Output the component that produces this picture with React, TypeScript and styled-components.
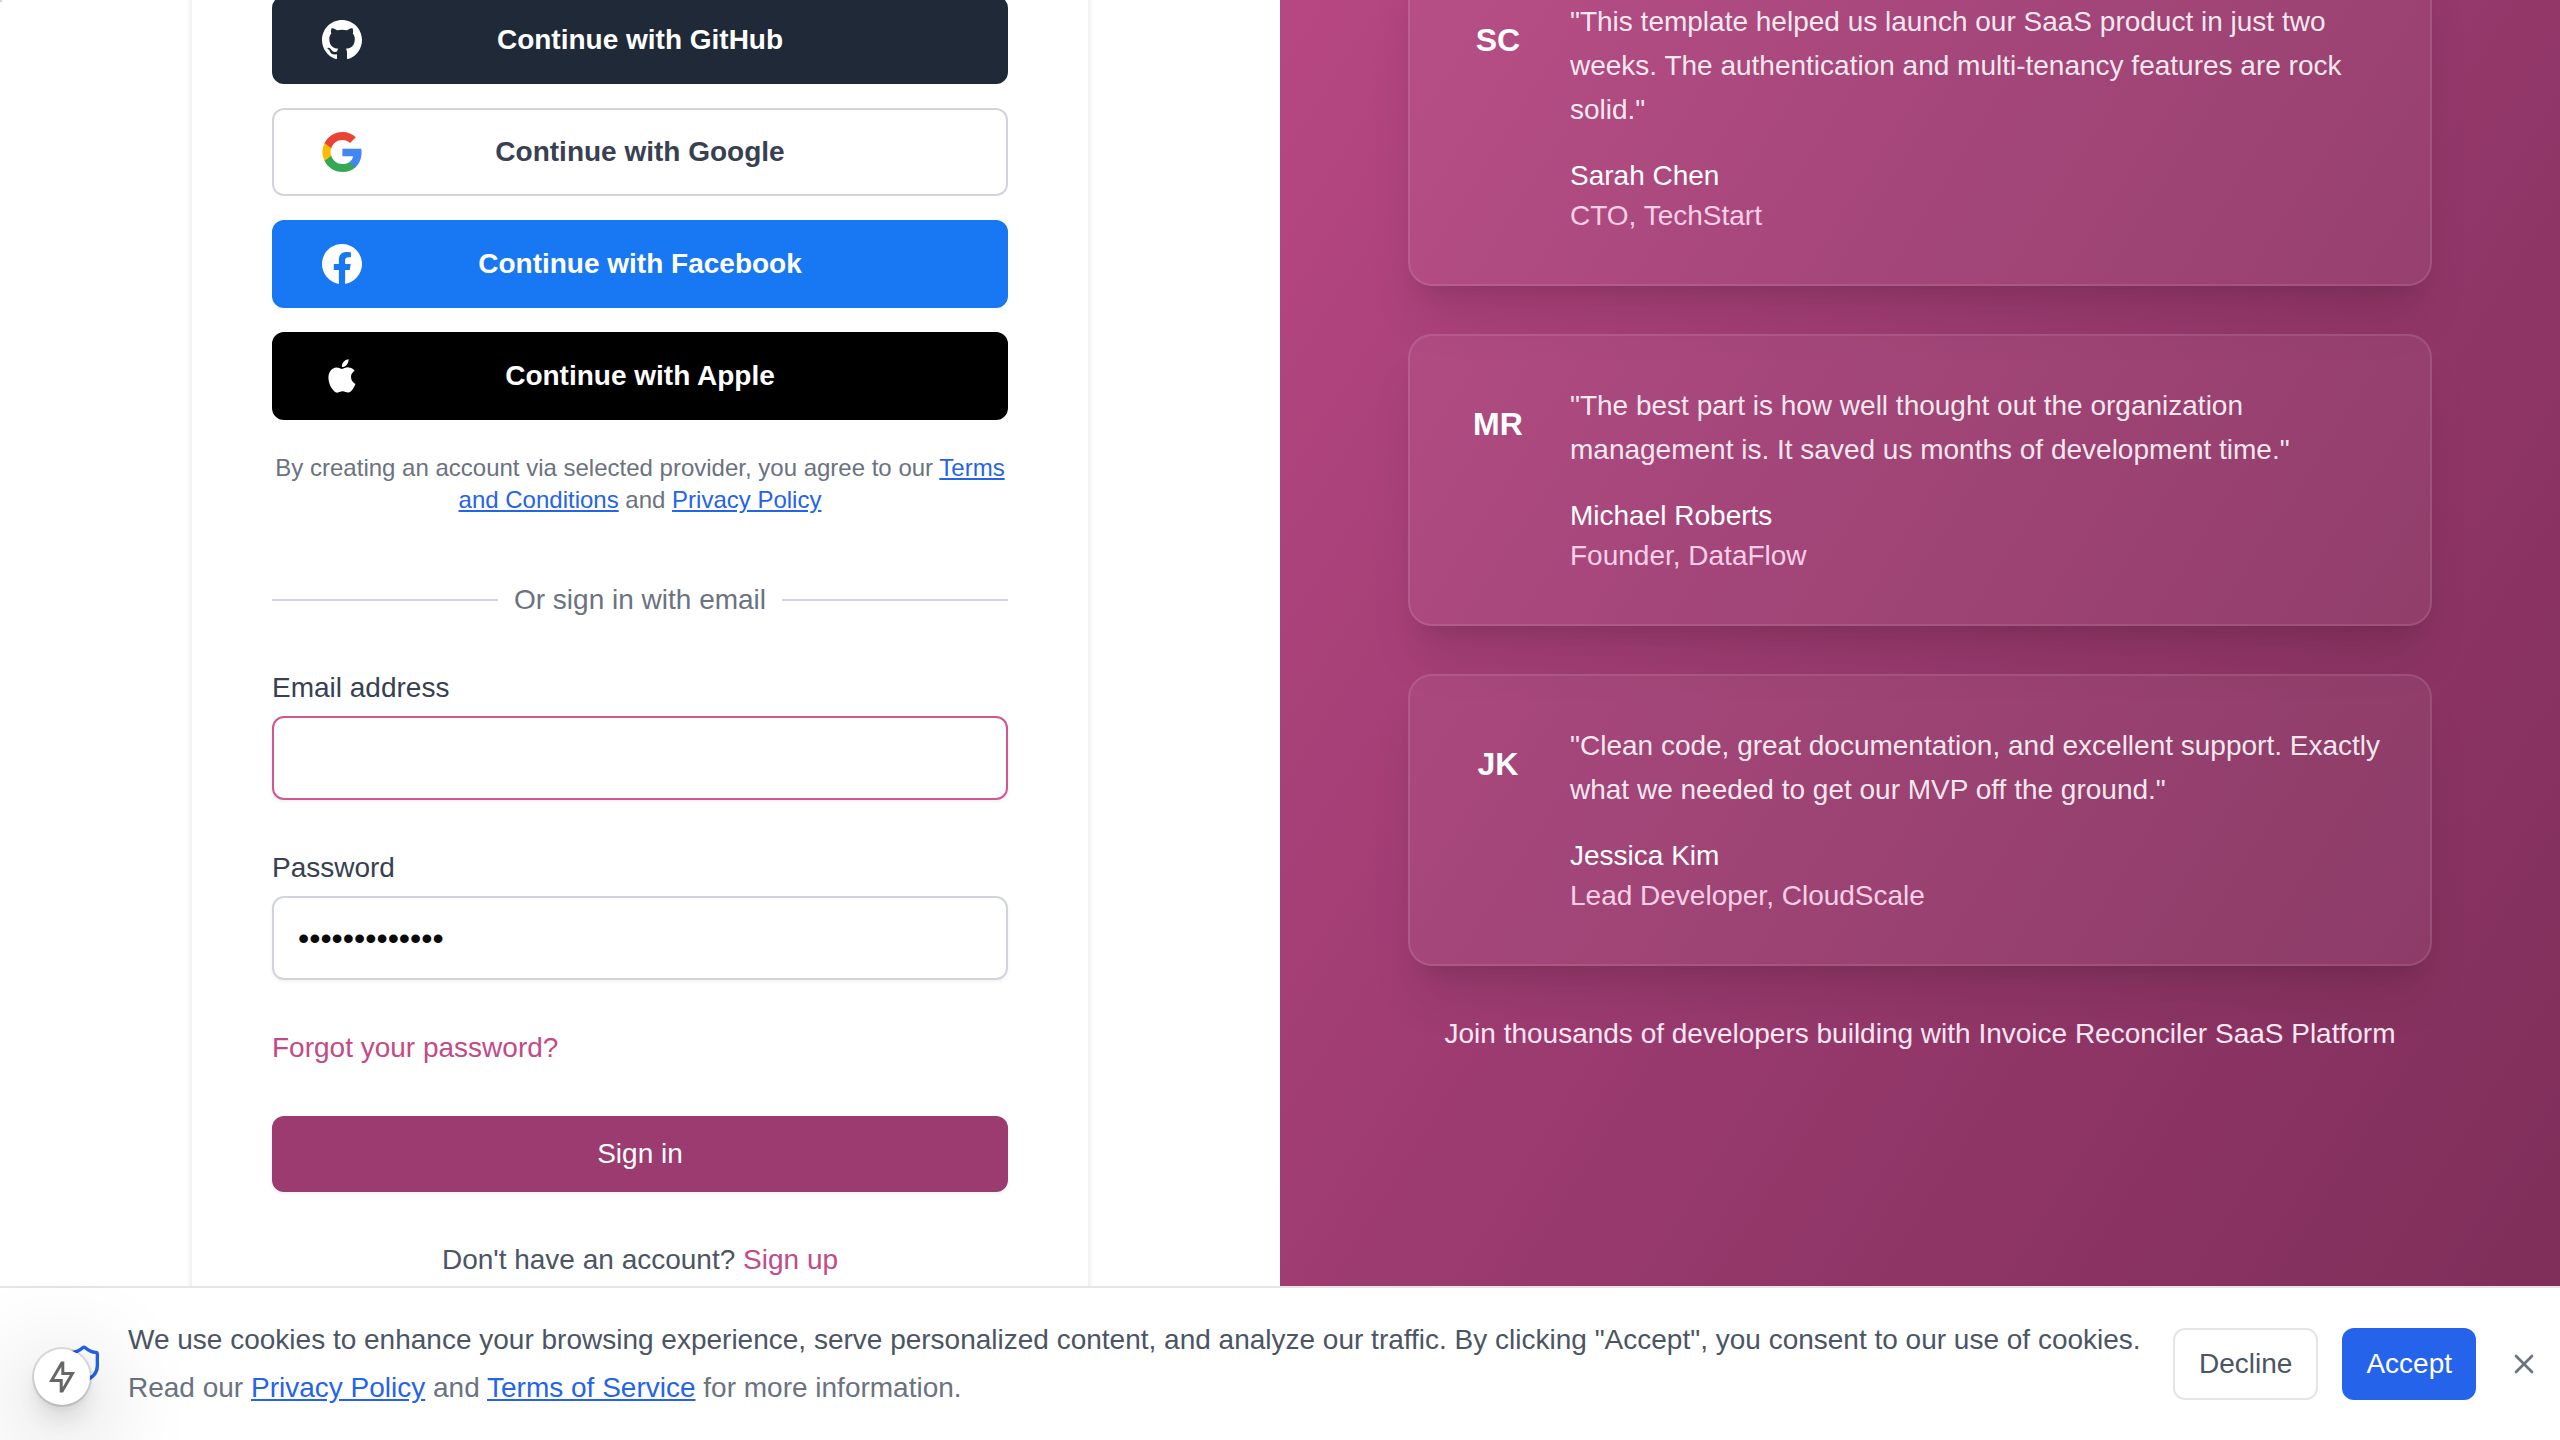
import React from 'react';
import styled, { createGlobalStyle, css } from 'styled-components';
import { Shield, X } from 'lucide-react';

const GlobalStyle = createGlobalStyle`
  *, *::before, *::after { box-sizing: border-box; }
  body {
    margin: 0;
    background: #ffffff;
    color: #0a0a0a;
    font-family: "Liberation Sans", Arial, sans-serif;
    font-size: 28px;
    line-height: 40px;
    -webkit-font-smoothing: antialiased;
  }
  button, input { font: inherit; }
  h2, p { margin: 0; }
`;

const Page = styled.div`
  height: 100vh;
  overflow: hidden;
`;

/* The page rests in a scrolled position, so its top part lies above the window. */
const Columns = styled.main`
  display: grid;
  grid-template-columns: 1fr 1fr;
  min-height: calc(100vh + 600px);
  margin-top: -600px;
`;

const SignInColumn = styled.section`
  display: flex;
  justify-content: center;
`;

const SignInCard = styled.div`
  width: 100%;
  max-width: 896px;
  padding: 596px 80px 80px;
  background: #ffffff;
  box-shadow: 0 2px 8px rgba(0, 0, 0, 0.12);
`;

const ProviderList = styled.div`
  display: flex;
  flex-direction: column;
  gap: 24px;
`;

type Tone = 'github' | 'google' | 'facebook' | 'apple';

const tones: Record<Tone, ReturnType<typeof css>> = {
  github: css`background: #1f2937; border-color: #1f2937; color: #ffffff;`,
  google: css`background: #ffffff; border-color: #d1d5db; color: #374151;`,
  facebook: css`background: #1877f2; border-color: #1877f2; color: #ffffff;`,
  apple: css`background: #000000; border-color: #000000; color: #ffffff;`,
};

const ProviderButton = styled.button<{ $tone: Tone }>`
  display: grid;
  grid-template-columns: 40px 1fr 40px;
  align-items: center;
  height: 88px;
  padding: 0 48px;
  border: 2px solid;
  border-radius: 12px;
  font-weight: 700;
  cursor: pointer;
  ${({ $tone }) => tones[$tone]}

  svg { display: block; width: 40px; height: 40px; }
`;

const Legal = styled.p`
  margin-top: 32px;
  color: #6b7280;
  font-size: 24px;
  line-height: 32px;
  text-align: center;
`;

const TextLink = styled.a`
  color: #2563eb;
  text-decoration: underline;
`;

const Divider = styled.div`
  display: flex;
  align-items: center;
  gap: 16px;
  margin: 64px 0 48px;
  color: #6b7280;

  &::before, &::after {
    content: "";
    flex: 1;
    height: 2px;
    background: #d1d5db;
  }
`;

const Form = styled.form`
  display: flex;
  flex-direction: column;
  gap: 48px;
`;

const Field = styled.div`
  display: flex;
  flex-direction: column;
  gap: 8px;
`;

const Label = styled.label`
  color: #374151;
`;

const Input = styled.input<{ $active?: boolean }>`
  width: 100%;
  height: 84px;
  padding: 0 24px;
  border: 2px solid ${({ $active }) => ($active ? '#d0578f' : '#d1d5db')};
  border-radius: 12px;
  background: #ffffff;
  color: #0a0a0a;
  font-size: 32px;
  box-shadow: 0 2px 4px rgba(0, 0, 0, 0.05);
  outline: none;
`;

const BrandLink = styled.a`
  color: #c24a86;
  text-decoration: none;
`;

const SubmitButton = styled.button`
  height: 76px;
  border: 0;
  border-radius: 12px;
  background: #9c3b70;
  color: #ffffff;
  box-shadow: 0 2px 4px rgba(0, 0, 0, 0.05);
  cursor: pointer;
`;

const SignUpLine = styled.p`
  color: #4b5563;
  text-align: center;
`;

const PraiseColumn = styled.section`
  display: flex;
  justify-content: center;
  padding-top: 550px;
  background: linear-gradient(to bottom right, #c24c8a, #9c3b70 50%, #7c2d58);
`;

const PraiseList = styled.div`
  display: flex;
  flex-direction: column;
  gap: 48px;
  width: 100%;
  max-width: 1024px;
`;

const PraiseCard = styled.article`
  display: flex;
  gap: 32px;
  padding: 48px;
  border: 2px solid rgba(255, 255, 255, 0.1);
  border-radius: 24px;
  background: rgba(255, 255, 255, 0.05);
  box-shadow: 0 40px 50px -10px rgba(0, 0, 0, 0.1), 0 16px 20px -12px rgba(0, 0, 0, 0.1);
`;

const Initials = styled.div`
  display: flex;
  flex: none;
  align-items: center;
  justify-content: center;
  width: 80px;
  height: 80px;
  color: #ffffff;
  font-size: 32px;
  font-weight: 700;
`;

const Quote = styled.p`
  margin-bottom: 24px;
  color: rgba(255, 255, 255, 0.9);
  line-height: 44px;
`;

const Author = styled.p`
  color: #ffffff;
`;

const Role = styled.p`
  color: #fbcfe8;
`;

const PraiseFooter = styled.p`
  color: #fce7f3;
  text-align: center;
`;

const CookieBar = styled.aside`
  position: fixed;
  right: 0;
  bottom: 0;
  left: 0;
  display: flex;
  align-items: center;
  gap: 24px;
  padding: 32px 12px 32px 64px;
  border-top: 2px solid #e5e5e5;
  background: #ffffff;
`;

const CookieText = styled.div`
  display: flex;
  flex: 1;
  flex-direction: column;
  gap: 8px;
  color: #4b5563;
`;

const CookieNote = styled.p`
  color: #6b7280;
`;

const CookieButton = styled.button<{ $primary?: boolean }>`
  height: 72px;
  padding: 0 24px;
  border: ${({ $primary }) => ($primary ? '0' : '2px solid #e5e5e5')};
  border-radius: 12px;
  background: ${({ $primary }) => ($primary ? '#2563eb' : '#ffffff')};
  color: ${({ $primary }) => ($primary ? '#ffffff' : '#4b5563')};
  cursor: pointer;
`;

const CloseButton = styled.button`
  display: flex;
  padding: 8px;
  border: 0;
  background: none;
  color: #6b7280;
  cursor: pointer;
`;

const DevBadge = styled.button`
  position: fixed;
  bottom: 35px;
  left: 34px;
  display: flex;
  align-items: center;
  justify-content: center;
  width: 56px;
  height: 56px;
  padding: 0;
  border: 0;
  border-radius: 50%;
  background: #ffffff;
  box-shadow: 0 0 0 2px rgba(0, 0, 0, 0.12), 0 4px 8px rgba(0, 0, 0, 0.06),
    0 16px 32px -8px rgba(0, 0, 0, 0.2), 0 24px 100px 8px rgba(0, 0, 0, 0.24);
  cursor: pointer;
`;

const CornerMark = styled.span`
  position: fixed;
  top: 0;
  left: 0;
  width: 2px;
  height: 2px;
  background: #d4d4d4;
`;

const GitHubIcon = () => (
  <svg viewBox="0 0 24 24" fill="currentColor" aria-hidden="true">
    <path d="M12 0C5.37 0 0 5.37 0 12c0 5.31 3.435 9.795 8.205 11.385.6.105.825-.255.825-.57 0-.285-.015-1.23-.015-2.235-3.015.555-3.795-.735-4.035-1.41-.135-.345-.72-1.41-1.23-1.695-.42-.225-1.02-.78-.015-.795.945-.015 1.62.87 1.845 1.23 1.08 1.815 2.805 1.305 3.495.99.105-.78.42-1.305.765-1.605-2.67-.3-5.46-1.335-5.46-5.925 0-1.305.465-2.385 1.23-3.225-.12-.3-.54-1.53.12-3.18 0 0 1.005-.315 3.3 1.23.96-.27 1.98-.405 3-.405s2.04.135 3 .405c2.295-1.56 3.3-1.23 3.3-1.23.66 1.65.24 2.88.12 3.18.765.84 1.23 1.905 1.23 3.225 0 4.605-2.805 5.625-5.475 5.925.435.375.81 1.095.81 2.22 0 1.605-.015 2.895-.015 3.3 0 .315.225.69.825.57A12.02 12.02 0 0024 12c0-6.63-5.37-12-12-12z" />
  </svg>
);

const GoogleIcon = () => (
  <svg viewBox="0 0 24 24" aria-hidden="true">
    <path fill="#4285F4" d="M23.745 12.27c0-.79-.07-1.54-.19-2.27h-11.3v4.51h6.47c-.29 1.48-1.14 2.73-2.4 3.58v3h3.86c2.26-2.09 3.56-5.17 3.56-8.82z" />
    <path fill="#34A853" d="M12.255 24c3.24 0 5.95-1.08 7.93-2.91l-3.86-3c-1.08.72-2.45 1.16-4.07 1.16-3.13 0-5.78-2.11-6.73-4.96h-3.98v3.09C3.515 21.3 7.565 24 12.255 24z" />
    <path fill="#FBBC05" d="M5.525 14.29c-.25-.72-.38-1.49-.38-2.29s.14-1.57.38-2.29V6.62h-3.98a11.86 11.86 0 000 10.76l3.98-3.09z" />
    <path fill="#EA4335" d="M12.255 4.75c1.77 0 3.35.61 4.6 1.8l3.42-3.42C18.205 1.19 15.495 0 12.255 0c-4.69 0-8.74 2.7-10.71 6.62l3.98 3.09c.95-2.85 3.6-4.96 6.73-4.96z" />
  </svg>
);

const FacebookIcon = () => (
  <svg viewBox="0 0 24 24" fill="currentColor" aria-hidden="true">
    <path d="M24 12.073c0-6.627-5.373-12-12-12s-12 5.373-12 12c0 5.99 4.388 10.954 10.125 11.854v-8.385H7.078v-3.47h3.047V9.43c0-3.007 1.792-4.669 4.533-4.669 1.312 0 2.686.235 2.686.235v2.953H15.83c-1.491 0-1.956.925-1.956 1.874v2.25h3.328l-.532 3.47h-2.796v8.385C19.612 23.027 24 18.062 24 12.073z" />
  </svg>
);

const AppleIcon = () => (
  <svg viewBox="0 0 24 24" fill="currentColor" aria-hidden="true">
    <path d="M18.71 19.5c-.83 1.24-1.71 2.45-3.05 2.47-1.34.03-1.77-.79-3.29-.79-1.53 0-2 .77-3.27.82-1.31.05-2.3-1.32-3.14-2.53C4.25 17 2.94 12.45 4.7 9.39c.87-1.52 2.43-2.48 4.12-2.51 1.28-.02 2.5.87 3.29.87.78 0 2.26-1.07 3.81-.91.65.03 2.47.26 3.64 1.98-.09.06-2.17 1.28-2.15 3.81.03 3.02 2.65 4.03 2.68 4.04-.03.07-.42 1.44-1.38 2.83M13 3.5c.73-.83 1.94-1.46 2.94-1.5.13 1.17-.34 2.35-1.04 3.19-.69.85-1.83 1.51-2.95 1.42-.15-1.15.41-2.35 1.05-3.11z" />
  </svg>
);

const BoltIcon = () => (
  <svg width="32" height="32" viewBox="0 0 16 16" fill="none" stroke="#666666" strokeWidth="1.5" aria-hidden="true">
    <path d="M7.9 1 2.8 9.75H7.6V15h.5L13.2 6.25H8.4V1Z" />
  </svg>
);

const providers: { name: string; tone: Tone; Icon: () => React.ReactElement }[] = [
  { name: 'GitHub', tone: 'github', Icon: GitHubIcon },
  { name: 'Google', tone: 'google', Icon: GoogleIcon },
  { name: 'Facebook', tone: 'facebook', Icon: FacebookIcon },
  { name: 'Apple', tone: 'apple', Icon: AppleIcon },
];

const praise = [
  {
    initials: 'SC',
    quote: '"This template helped us launch our SaaS product in just two weeks. The authentication and multi-tenancy features are rock solid."',
    author: 'Sarah Chen',
    role: 'CTO, TechStart',
  },
  {
    initials: 'MR',
    quote: '"The best part is how well thought out the organization management is. It saved us months of development time."',
    author: 'Michael Roberts',
    role: 'Founder, DataFlow',
  },
  {
    initials: 'JK',
    quote: '"Clean code, great documentation, and excellent support. Exactly what we needed to get our MVP off the ground."',
    author: 'Jessica Kim',
    role: 'Lead Developer, CloudScale',
  },
];

export default function App() {
  return (
    <Page>
      <GlobalStyle />
      <Columns>
        <SignInColumn>
          <SignInCard>
            <ProviderList>
              {providers.map(({ name, tone, Icon }) => (
                <ProviderButton key={name} type="button" $tone={tone}>
                  <Icon />
                  <span>Continue with {name}</span>
                </ProviderButton>
              ))}
            </ProviderList>
            <Legal>
              By creating an account via selected provider, you agree to our{' '}
              <TextLink href="#terms">Terms and Conditions</TextLink> and{' '}
              <TextLink href="#privacy">Privacy Policy</TextLink>
            </Legal>
            <Divider>Or sign in with email</Divider>
            <Form onSubmit={(event) => event.preventDefault()}>
              <Field>
                <Label htmlFor="email">Email address</Label>
                <Input id="email" type="email" $active />
              </Field>
              <Field>
                <Label htmlFor="password">Password</Label>
                <Input id="password" type="password" defaultValue="correct-horse" />
              </Field>
              <div>
                <BrandLink href="#forgot">Forgot your password?</BrandLink>
              </div>
              <SubmitButton type="submit">Sign in</SubmitButton>
              <SignUpLine>
                Don't have an account? <BrandLink href="#signup">Sign up</BrandLink>
              </SignUpLine>
            </Form>
          </SignInCard>
        </SignInColumn>
        <PraiseColumn>
          <PraiseList>
            {praise.map(({ initials, quote, author, role }) => (
              <PraiseCard key={initials}>
                <Initials>{initials}</Initials>
                <div>
                  <Quote>{quote}</Quote>
                  <Author>{author}</Author>
                  <Role>{role}</Role>
                </div>
              </PraiseCard>
            ))}
            <PraiseFooter>
              Join thousands of developers building with Invoice Reconciler SaaS Platform
            </PraiseFooter>
          </PraiseList>
        </PraiseColumn>
      </Columns>
      <CookieBar aria-label="Cookie consent">
        <Shield size={40} color="#2563eb" aria-hidden="true" />
        <CookieText>
          <p>
            We use cookies to enhance your browsing experience, serve personalized content, and analyze our
            traffic. By clicking "Accept", you consent to our use of cookies.
          </p>
          <CookieNote>
            Read our <TextLink href="#privacy">Privacy Policy</TextLink> and{' '}
            <TextLink href="#terms">Terms of Service</TextLink> for more information.
          </CookieNote>
        </CookieText>
        <CookieButton type="button">Decline</CookieButton>
        <CookieButton type="button" $primary>Accept</CookieButton>
        <CloseButton type="button" aria-label="Close">
          <X size={32} />
        </CloseButton>
      </CookieBar>
      <DevBadge type="button" aria-label="Open developer tools">
        <BoltIcon />
      </DevBadge>
      <CornerMark />
    </Page>
  );
}
